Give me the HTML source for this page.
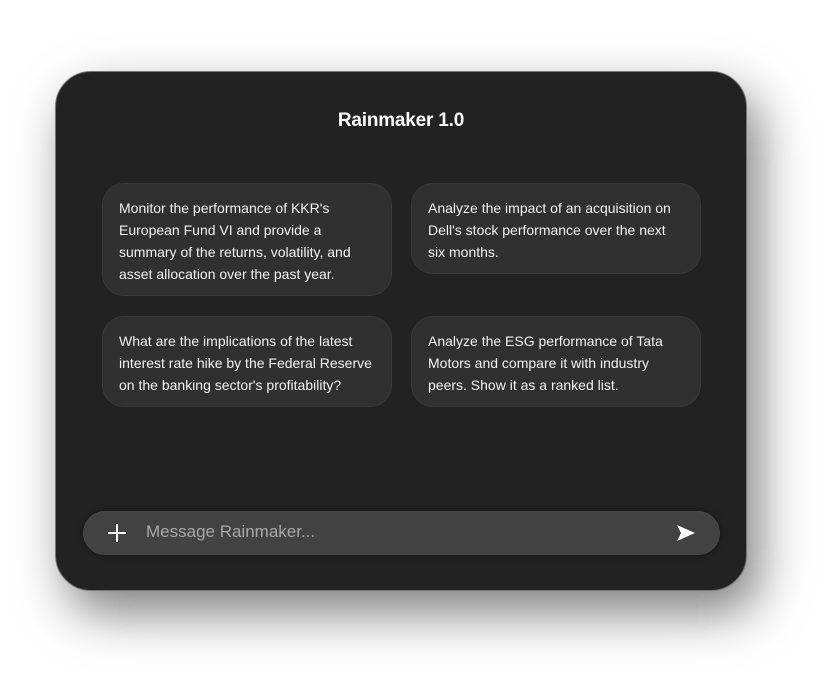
<!DOCTYPE html>
<html><head><style>
body{margin:0;width:829px;height:685px;background:#fff;position:relative;overflow:hidden;font-family:"Liberation Sans",sans-serif}
.win{position:absolute;left:55px;top:71px;width:692px;height:520px;background:#222;border-radius:36px;border:1px solid #777;box-sizing:border-box;box-shadow:12px 22px 50px rgba(0,0,0,.5)}
h1{position:absolute;left:55px;width:692px;top:110px;margin:0;text-align:center;color:#fff;font-size:19px;font-weight:bold;letter-spacing:-0.2px}
.c{position:absolute;background:#303030;border:1px solid #3a3a3a;border-radius:22px;box-sizing:border-box;color:#f2f2f2;font-size:14px;line-height:22px;padding:13px 16px}
.in{position:absolute;left:83px;top:511px;width:637px;height:44px;background:#424242;border-radius:22px;border:1px solid #4a4a4a;box-sizing:border-box;box-shadow:0 0 6px rgba(0,0,0,.5)}
.ph{position:absolute;left:146px;top:522px;color:#a8a8a8;font-size:17px}
</style></head><body>
<div class="win"></div>
<h1>Rainmaker 1.0</h1>
<div class="c" style="left:102px;top:183px;width:290px;height:113px">Monitor the performance of KKR's European Fund VI and provide a summary of the returns, volatility, and asset allocation over the past year.</div>
<div class="c" style="left:411px;top:183px;width:290px;height:91px">Analyze the impact of an acquisition on Dell's stock performance over the next six months.</div>
<div class="c" style="left:102px;top:316px;width:290px;height:91px">What are the implications of the latest interest rate hike by the Federal Reserve on the banking sector's profitability?</div>
<div class="c" style="left:411px;top:316px;width:290px;height:91px">Analyze the ESG performance of Tata Motors and compare it with industry peers. Show it as a ranked list.</div>
<div class="in"></div>
<svg style="position:absolute;left:107px;top:523px" width="20" height="20"><path d="M10 1V19M1 10H19" stroke="#fff" stroke-width="2"/></svg>
<div class="ph">Message Rainmaker...</div>
<svg style="position:absolute;left:676px;top:524px" width="20" height="18"><path d="M1 1L19 9L1 17L5 9Z" fill="#fff"/></svg>
</body></html>
